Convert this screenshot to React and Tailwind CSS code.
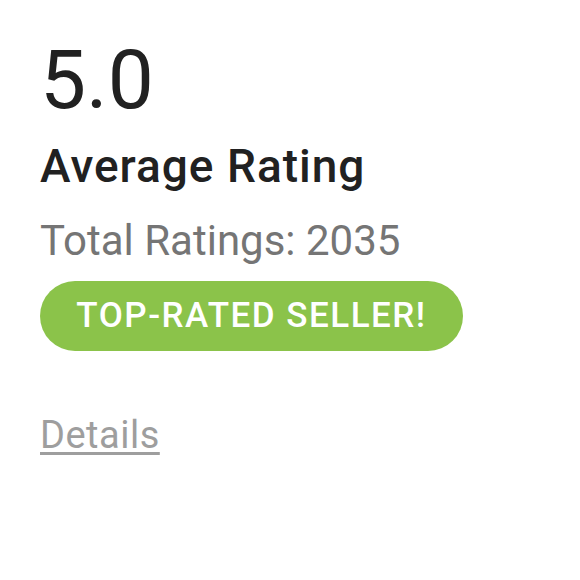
export default function App() {
  return (
    <div className="w-[580px] h-[580px] bg-white font-['Roboto',sans-serif]">
      <div className="flex flex-col items-start px-10 pt-[39px]">
        <div className="text-[82px] leading-none font-normal text-[#212121]">5.0</div>
        <div className="mt-[22px] text-[46px] leading-none font-medium tracking-[1px] text-[#212121]">Average Rating</div>
        <div className="mt-[31px] text-[42px] leading-none text-[#757575]">Total Ratings: 2035</div>
        <div className="mt-[19px] h-[70px] w-[423px] rounded-full bg-[#8bc34a] flex items-center justify-center text-white text-[35px] font-medium tracking-[1.5px]">
          TOP-RATED SELLER!
        </div>
        <a href="#" className="mt-[65px] text-[38px] leading-none tracking-[0.5px] text-[#9e9e9e] underline underline-offset-4">Details</a>
      </div>
    </div>
  );
}
